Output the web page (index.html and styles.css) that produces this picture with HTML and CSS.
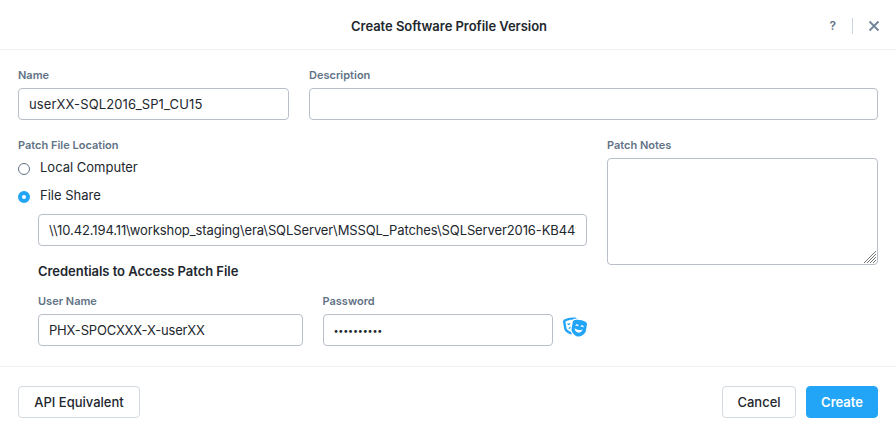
FILE: index.html
```html
<!DOCTYPE html>
<html lang="en">
<head>
<meta charset="utf-8">
<title>Create Software Profile Version</title>
<link rel="stylesheet" href="styles.css">
</head>
<body>
<div class="dialog">
  <header class="dialog-header">
    <h1>Create Software Profile Version</h1>
    <div class="header-actions">
      <span class="help">?</span>
      <span class="divider"></span>
      <svg class="close" viewBox="0 0 12 12" width="12" height="12"><path d="M1.5 1.5l9 9M10.5 1.5l-9 9"/></svg>
    </div>
  </header>
  <main class="dialog-body">
    <div class="row">
      <div class="field name"><label for="name">Name</label><input id="name" class="name-input" type="text" value="userXX-SQL2016_SP1_CU15"></div>
      <div class="field grow"><label for="desc">Description</label><input id="desc" type="text"></div>
    </div>
    <div class="row second">
      <div class="location">
        <span class="label loc-label">Patch File Location</span>
        <div class="radio"><span class="dot"></span><span class="local">Local Computer</span></div>
        <div class="radio share"><span class="dot checked"></span><span class="file">File Share</span></div>
        <div class="share-body">
          <input class="path" type="text" value="\\10.42.194.11\workshop_staging\era\SQLServer\MSSQL_Patches\SQLServer2016-KB4495257-x64.exe">
          <h2>Credentials to Access Patch File</h2>
          <div class="row">
            <div class="field user"><label for="user">User Name</label><input id="user" class="user-input" type="text" value="PHX-SPOCXXX-X-userXX"></div>
            <div class="field password"><label for="pw">Password</label>
              <div class="pw-row"><input id="pw" class="pw-input" type="text" value="••••••••••">
              <svg class="masks" viewBox="0 0 640 512" width="24" height="20"><path fill-rule="evenodd" d="M206.86 245.15c-35.88 10.45-59.95 41.2-57.53 74.1 11.4-12.72 28.81-23.7 49.9-30.92l7.63-43.18zM95.81 295L64.08 115.49c-.29-1.62.28-2.62.24-2.65 57.76-32.06 123.12-49.01 189.01-49.01 1.61 0 3.23.17 4.85.19 13.95-13.47 31.73-22.83 51.59-26 18.89-3.02 38.05-4.55 57.18-5.32-9.99-13.95-24.48-24.23-41.77-27C301.27 1.89 277.24 0 253.32 0 176.66 0 101.02 19.42 33.2 57.06 9.03 70.48-3.92 98.48 1.05 126.58l31.73 179.51c14.23 80.52 136.33 142.08 204.45 142.08 3.59 0 6.75-.46 10.01-.8-13.52-17.08-28.94-40.48-39.5-67.58-47.61-12.98-106.06-51.62-111.93-84.79zm97.55-137.46c-.73-4.12-2.23-7.87-4.07-11.4-8.25 8.91-20.67 15.75-35.32 18.32-14.65 2.58-28.67.4-39.48-5.17-.52 3.94-.64 7.98.09 12.1 3.84 21.7 24.58 36.19 46.34 32.37 21.75-3.82 36.28-24.52 32.44-46.22zM606.8 120.9c-88.98-49.38-191.43-67.41-291.98-51.35-27.31 4.36-49.08 26.26-54.04 54.36l-31.73 179.51c-15.39 87.05 95.28 196.27 158.31 207.35 63.03 11.09 204.47-53.79 219.86-140.84l31.73-179.51c4.97-28.11-7.98-56.11-32.15-69.52zm-273.24 96.8c3.84-21.7 24.58-36.19 46.34-32.36 21.76 3.83 36.28 24.52 32.45 46.22-.73 4.12-2.23 7.87-4.07 11.4-8.25-8.91-20.67-15.75-35.32-18.32-14.65-2.58-28.67-.4-39.48 5.17-.53-3.95-.65-7.99.08-12.11zm138 24c3.84-21.7 24.58-36.19 46.34-32.36 21.76 3.83 36.28 24.52 32.45 46.22-.73 4.12-2.23 7.87-4.07 11.4-8.25-8.91-20.67-15.75-35.32-18.32-14.65-2.58-28.67-.4-39.48 5.17-.53-3.95-.65-7.99.08-12.11zM311 286c45 40 155 60 213 37-20 61-72 91-125 82-52-9-90-57-88-119z"/></svg></div>
            </div>
          </div>
        </div>
      </div>
      <div class="field notes"><label for="notes">Patch Notes</label>
        <div class="notes-wrap"><textarea id="notes"></textarea><svg class="grip" viewBox="0 0 14 14" width="14" height="14"><path d="M1 13L13 1M4 13l9-9M7 13l6-6M10 13l3-3"/></svg></div>
      </div>
    </div>
  </main>
  <footer class="dialog-footer">
    <button class="api">API Equivalent</button>
    <div class="actions"><button class="cancel">Cancel</button><button class="primary">Create</button></div>
  </footer>
</div>
</body>
</html>
```
FILE: styles.css
```css
* { box-sizing: border-box; }
body { margin: 0; background: #fff; color: #22272e; font-family: Inter, "Liberation Sans", sans-serif; font-size: 13px; }
.dialog { height: 437px; display: flex; flex-direction: column; }
.dialog-header { height: 50px; border-bottom: 1px solid #f0f2f4; display: grid; grid-template-columns: 1fr auto 1fr; align-items: center; padding: 2px 16px 0 18px; }
h1 { grid-column: 2; margin: 0; font-size: 13px; line-height: 18px; font-weight: 600; letter-spacing: -0.04px; white-space: nowrap; }
.header-actions { justify-self: end; display: flex; align-items: center; color: #627386; }
.help { font-size: 12px; font-weight: 600; margin-right: 1px; }
.divider { width: 1px; height: 16px; background: #ccd4dd; margin: 0 15px; }
.close { fill: none; stroke: #718398; stroke-width: 1.8; }
.dialog-body { flex: 1; padding: 18px 18px 0; }
.row { display: flex; gap: 20px; }
.second { margin-top: 18px; }
label, .label { display: block; height: 14px; margin-bottom: 6px; font-size: 11px; line-height: 14px; font-weight: 600; color: #627386; white-space: nowrap; }
input { display: block; width: 100%; height: 32px; border: 1px solid #b8bfca; border-radius: 4px; padding: 1px 10px; background: #fff; color: #22272e; font: inherit; outline: none; }
.name-input { letter-spacing: 0.13px; }
.path { letter-spacing: -0.11px; }
.user-input { letter-spacing: -0.18px; }
.name, .notes { width: 271px; }
.grow { flex: 1; }
.location { width: 569px; }
.loc-label { margin-bottom: 6px; }
.radio { display: flex; align-items: center; gap: 10px; height: 18px; line-height: 18px; }
.share { margin-top: 10px; }
.dot { width: 12px; height: 12px; border: 1px solid #627386; border-radius: 50%; margin-top: 3px; }
.checked { border: 4px solid #22a5f7; }
.share-body { margin: 10px 0 0 20px; }
h2 { margin: 16px 0 14px; font-size: 13px; line-height: 18px; font-weight: 600; height: 18px; letter-spacing: -0.04px; }
.user { width: 265px; }
.password { width: 265px; }
.pw-row { display: flex; gap: 10px; }
.pw-input { width: 230px; font-size: 9px; letter-spacing: -0.2px; }
.masks { margin-top: 3px; fill: #22a5f7; flex: none; }
.notes-wrap { position: relative; height: 107px; }
textarea { display: block; width: 100%; height: 107px; border: 1px solid #b8bfca; border-radius: 4px; resize: none; outline: none; background: #fff; }
.grip { position: absolute; right: 1px; bottom: 1px; fill: none; stroke: #777; stroke-width: 1; }
.dialog-footer { height: 71px; border-top: 1px solid #f0f2f4; padding: 0 18px; display: flex; align-items: center; justify-content: space-between; }
button { height: 32px; border: 1px solid #d3d9e0; border-radius: 4px; padding: 0; background: #fff; color: #22272e; font: 500 13px Inter, sans-serif; }
.api { width: 122px; }
.actions { display: flex; gap: 10px; }
.cancel { width: 74px; }
.primary { width: 72px; background: #22a5f7; border-color: #22a5f7; color: #fff; font-weight: 600; }
```
